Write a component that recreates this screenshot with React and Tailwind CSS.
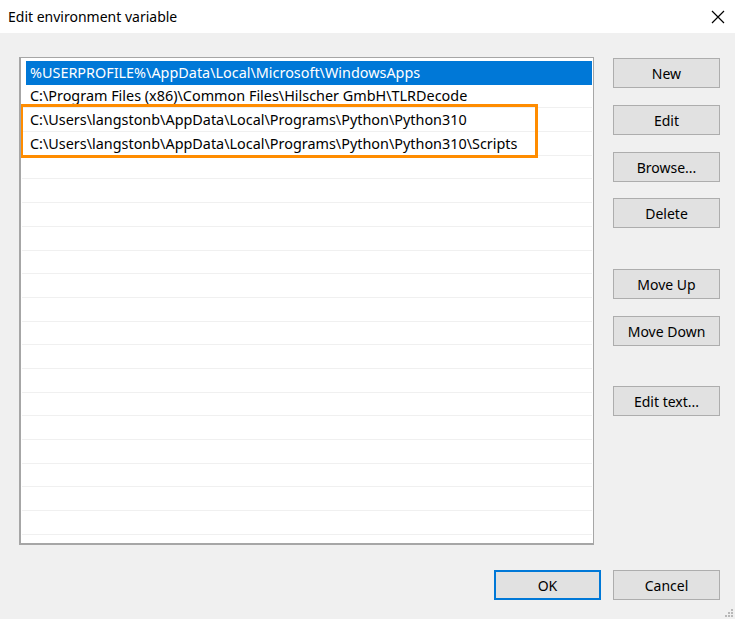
const paths = [
  '%USERPROFILE%\\AppData\\Local\\Microsoft\\WindowsApps',
  'C:\\Program Files (x86)\\Common Files\\Hilscher GmbH\\TLRDecode',
  'C:\\Users\\langstonb\\AppData\\Local\\Programs\\Python\\Python310',
  'C:\\Users\\langstonb\\AppData\\Local\\Programs\\Python\\Python310\\Scripts',
]

const font = { fontFamily: '"Segoe UI", "Noto Sans", sans-serif' }

function Btn({ label, primary, className = '' }) {
  return (
    <button
      className={`w-[107px] h-[30px] bg-[#e1e1e1] text-[14px] text-black flex items-center justify-center ${primary ? 'border-2 border-[#0078d7]' : 'border border-[#adadad]'} ${className}`}
    >
      {label}
    </button>
  )
}

export default function App() {
  const rows = Array.from({ length: 20 })
  return (
    <div className="w-[735px] h-[619px] bg-[#f0f0f0] flex flex-col relative overflow-hidden" style={font}>
      <div className="h-[33px] bg-white flex items-center justify-between pl-[8px] pr-[10px]">
        <span className="text-[14px] text-black">Edit environment variable</span>
        <svg width="14" height="14" viewBox="0 0 14 14">
          <path d="M1 1L13 13M13 1L1 13" stroke="#000" strokeWidth="1.2" />
        </svg>
      </div>

      <div className="flex pl-[19px] pt-[24px]">
        <div className="w-[575px] h-[488px] bg-white border border-[#a0a0a0] border-b-2 border-l-2 border-[#a6a6a6] pl-[1px] pr-[1px] pt-[3px] overflow-hidden relative">
          {rows.map((_, i) => (
            <div
              key={i}
              className={`h-[23.7px] flex items-center text-[14.4px] ${i === 0 ? 'bg-[#0078d7] text-white ml-[4px] pl-[4px]' : 'text-black border-b border-[#f0f0f0] pl-[8px]'}`}
            >
              {paths[i] || ''}
            </div>
          ))}
          <div className="absolute left-[-1px] top-[46px] w-[518px] h-[54px] border-[3px] border-[#ff8c00]" />
        </div>

        <div className="flex flex-col ml-[19px] pt-[1px]">
          <Btn label="New" />
          <Btn label="Edit" className="mt-[17px]" />
          <Btn label="Browse..." className="mt-[17px]" />
          <Btn label="Delete" className="mt-[16px]" />
          <Btn label="Move Up" className="mt-[41px]" />
          <Btn label="Move Down" className="mt-[17px]" />
          <Btn label="Edit text..." className="mt-[40px]" />
        </div>
      </div>

      <div className="flex justify-end gap-[12px] pr-[15px] mt-[25px]">
        <Btn label="OK" primary />
        <Btn label="Cancel" />
      </div>

      <svg width="8" height="8" viewBox="0 0 8 8" className="absolute right-[2px] bottom-[2px]">
        <rect x="6" y="0" width="2" height="2" fill="#b8b8b8" />
        <rect x="3" y="3" width="2" height="2" fill="#b8b8b8" />
        <rect x="6" y="3" width="2" height="2" fill="#b8b8b8" />
        <rect x="0" y="6" width="2" height="2" fill="#b8b8b8" />
        <rect x="3" y="6" width="2" height="2" fill="#b8b8b8" />
        <rect x="6" y="6" width="2" height="2" fill="#b8b8b8" />
      </svg>
    </div>
  )
}
